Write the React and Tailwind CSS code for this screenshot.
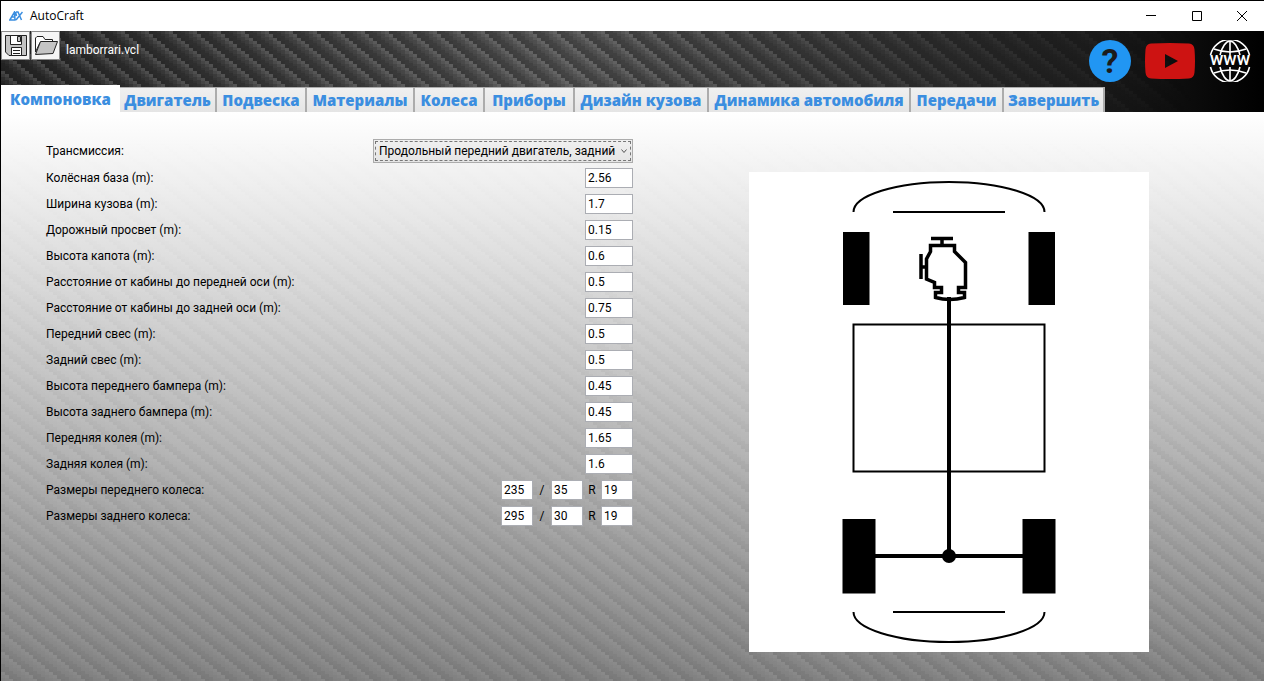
import React, { useState } from "react";

const tabs = [
  { name: "Компоновка", width: "w-[119px]" },
  { name: "Двигатель", width: "w-[97px]" },
  { name: "Подвеска", width: "w-[90px]" },
  { name: "Материалы", width: "w-[108px]" },
  { name: "Колеса", width: "w-[70px]" },
  { name: "Приборы", width: "w-[90px]" },
  { name: "Дизайн кузова", width: "w-[134px]" },
  { name: "Динамика автомобиля", width: "w-[202px]" },
  { name: "Передачи", width: "w-[93px]" },
  { name: "Завершить", width: "w-[101px]" },
];

const dimensions = [
  { id: "wheelbase", label: "Колёсная база (m):", value: "2.56" },
  { id: "bodyWidth", label: "Ширина кузова (m):", value: "1.7" },
  { id: "clearance", label: "Дорожный просвет (m):", value: "0.15" },
  { id: "hoodHeight", label: "Высота капота (m):", value: "0.6" },
  { id: "cabinFront", label: "Расстояние от кабины до передней оси (m):", value: "0.5" },
  { id: "cabinRear", label: "Расстояние от кабины до задней оси (m):", value: "0.75" },
  { id: "frontOverhang", label: "Передний свес (m):", value: "0.5" },
  { id: "rearOverhang", label: "Задний свес (m):", value: "0.5" },
  { id: "frontBumper", label: "Высота переднего бампера (m):", value: "0.45" },
  { id: "rearBumper", label: "Высота заднего бампера (m):", value: "0.45" },
  { id: "frontTrack", label: "Передняя колея (m):", value: "1.65" },
  { id: "rearTrack", label: "Задняя колея (m):", value: "1.6" },
];

const wheels = [
  { id: "frontWheel", label: "Размеры переднего колеса:", size: ["235", "35", "19"] },
  { id: "rearWheel", label: "Размеры заднего колеса:", size: ["295", "30", "19"] },
];

// top edge of every 4px wide strand, the weave repeats after 20px
const strands = [0, 3, 7, 10, 13, 17];

const Weave = ({ id, className }) => (
  <svg className={className} width="100%" height="100%" aria-hidden="true">
    <defs>
      <pattern id={id} width="24" height="20" patternUnits="userSpaceOnUse">
        {strands.map((y, i) =>
          [y, y - 20].map((top) => (
            <g key={top}>
              <rect x={i * 4} y={top} width="4" height="3" fill="#fff" opacity="0.28" />
              <rect x={i * 4} y={top + 3} width="4" height="3" fill="#fff" opacity="0.18" />
              <rect x={i * 4} y={top + 6} width="4" height="4" fill="#fff" opacity="0.06" />
              <rect x={i * 4} y={top + 12} width="4" height="5" fill="#000" opacity="0.2" />
              <rect x={i * 4} y={top + 17} width="4" height="3" fill="#000" opacity="0.3" />
            </g>
          ))
        )}
      </pattern>
    </defs>
    <rect width="100%" height="100%" fill={`url(#${id})`} />
  </svg>
);

const AppLogo = () => (
  <svg width="14" height="10" viewBox="0 0 14 10" fill="none" stroke="#3b8ee0" strokeWidth="1.5">
    <path d="M0.8 9 5.5 1 6 9zM3 6h3M7 1h2l3.500 8M13.500 1 7 9M6.500 1l1 4" />
  </svg>
);

const SaveIcon = () => (
  <svg width="24" height="24" viewBox="0 0 24 24" fill="none" stroke="#222" strokeWidth="1">
    <path fill="#c4c4c4" d="M1.500 1.500h21v20H5L1.500 18z" />
    <path fill="#fff" d="M6.500 1.500h11v9h-11z" />
    <path fill="#c4c4c4" d="M13.500 2.500h3v5h-3z" />
    <path fill="#fff" d="M7.500 13.500h10v8h-10z" />
    <path d="M9 16.500h7M9 19.500h7" />
  </svg>
);

const FolderIcon = () => (
  <svg width="24" height="24" viewBox="0 0 24 24" stroke="#222" strokeWidth="1" strokeLinejoin="round">
    <path fill="#fff" d="M1.500 18V4L3 2.500h6l2 3h7.500v3H6z" />
    <path fill="#c4c4c4" d="M1.500 20.500 6.500 7.500h17L19 19.500z" />
  </svg>
);

const HelpIcon = () => (
  <svg width="42" height="42" viewBox="0 0 42 42">
    <circle cx="21" cy="21" r="21" fill="#2196f3" />
    <text x="21" y="33" textAnchor="middle" fill="#1c1c1c" className="font-['Roboto',sans-serif] text-[34px] font-bold">?</text>
  </svg>
);

const VideoIcon = () => (
  <svg width="50" height="36" viewBox="0 0 50 36">
    <path
      fill="#cd1312"
      fillRule="evenodd"
      d="M6 .5Q25-.5 44 .5 49 1 49.500 6.500q1 11.500 0 23-.5 5.500-5.500 6-19 1-38 0-5-.5-5.500-6-1-11.500 0-23Q1 1 6 .5zM20 11v14l13-7z"
    />
  </svg>
);

const WebIcon = () => (
  <svg width="42" height="42" viewBox="0 0 42 42" fill="none" stroke="#fff" strokeWidth="1.600">
    <path d="M1.500 15a20 20 0 0 1 39 0M1.500 27a20 20 0 0 0 39 0M21 1v14M21 27v14" />
    <path d="M11 15C13 7 17 1 21 1s8 6 10 14M11 27c2 8 6 14 10 14s8-6 10-14" />
    <path d="M5 9q16 6 32 0M5 33q16-6 32 0" />
    <text x="21" y="25" textAnchor="middle" fill="#fff" stroke="none" className="font-['Roboto',sans-serif] text-[18px] font-medium">www</text>
  </svg>
);

const CarDiagram = () => (
  <svg className="block w-full" viewBox="0 0 400 480" role="img" aria-label="Схема автомобиля">
    <rect width="400" height="480" fill="#fff" />
    <g fill="none" stroke="#000" strokeWidth="2">
      <path d="M104.500 40A95.500 30 0 0 1 295.500 40M144 40h112" />
      <path d="M104.500 152.500h191v147h-191z" />
      <path d="M104.500 440A95.500 30 0 0 0 295.500 440M144 440h112" />
    </g>
    <path d="M94 60h26.500v73H94zM279.500 60H306v73h-26.500zM93.500 347h33v74.500h-33zM273.500 347h33v74.500h-33z" />
    <path d="M200 125v259M126 384h148" stroke="#000" strokeWidth="4" />
    <circle cx="200" cy="384" r="7" />
    <path
      d="M182 66.500h22M193 66.500v6M172 82v25M172 95h5M181.500 73.500h24v6l11 11v25h-7v5h6v5q-15 4-29 0v-5h6v-5h-7v-5l-8-3.500V87l4-7.500z"
      fill="none"
      stroke="#000"
      strokeWidth="3.500"
    />
  </svg>
);

const App = () => {
  const [activeTab, setActiveTab] = useState("Компоновка");

  return (
    <div className="flex min-h-screen flex-col border-l border-t border-black bg-white font-['Open_Sans','Noto_Sans',sans-serif] text-xs text-black">
      <header className="flex h-[30px] shrink-0 items-center justify-between pl-2">
        <div className="flex items-center gap-[7px]">
          <AppLogo />
          <h1>AutoCraft</h1>
        </div>
        <div className="flex h-full">
          <button className="flex w-[46px] items-center justify-center" aria-label="Свернуть">
            <svg width="10" height="10" stroke="#000"><path d="M0 4.500h10" /></svg>
          </button>
          <button className="flex w-[46px] items-center justify-center" aria-label="Развернуть">
            <svg width="10" height="10" stroke="#000" fill="none"><path d="M.5.5h9v9h-9z" /></svg>
          </button>
          <button className="flex w-11 items-center justify-center" aria-label="Закрыть">
            <svg width="10" height="10" stroke="#000"><path d="M0 0l10 10M10 0L0 10" /></svg>
          </button>
        </div>
      </header>

      <div className="grid h-[81px] shrink-0 bg-[linear-gradient(to_right,#262626,#4c4c4c_45%,#1c1c1c_86%,#000)]">
        <Weave id="toolbarWeave" className="col-start-1 row-start-1 h-[81px] mask-r-from-50% mask-r-to-95% opacity-50" />
        <div className="z-10 col-start-1 row-start-1 flex flex-col justify-between">
          <div className="flex items-start justify-between">
            <div className="flex items-center gap-px">
              <button className="flex size-[29px] items-center justify-center border border-[#8a8a8a] bg-[#f5f5f5]" aria-label="Сохранить">
                <SaveIcon />
              </button>
              <button className="flex size-[29px] items-center justify-center border border-[#8a8a8a] bg-[#f5f5f5]" aria-label="Открыть">
                <FolderIcon />
              </button>
              <span className="pl-[5px] pt-2 font-['Roboto',sans-serif] text-white">lamborrari.vcl</span>
            </div>
            <div className="flex h-[52px] items-center gap-[14px] pr-[13px] pt-2">
              <a href="#help" aria-label="Справка"><HelpIcon /></a>
              <a href="#video" aria-label="Видео"><VideoIcon /></a>
              <a href="#web" aria-label="Сайт"><WebIcon /></a>
            </div>
          </div>
          <nav className="flex items-end" role="tablist">
            {tabs.map((tab) => (
              <button
                key={tab.name}
                role="tab"
                aria-selected={activeTab === tab.name}
                onClick={() => setActiveTab(tab.name)}
                className={`${tab.width} shrink-0 whitespace-nowrap text-[15px] font-extrabold leading-6 text-[#3b8ee0] ${
                  activeTab === tab.name
                    ? "h-[27px] bg-white"
                    : "h-[25px] border-r-2 border-t border-[#acacac] bg-linear-to-b from-[#f0f0f0] to-[#e5e5e5]"
                }`}
              >
                {tab.name}
              </button>
            ))}
          </nav>
        </div>
      </div>

      <main className="grid grow bg-[linear-gradient(to_bottom,#fff,#808080)]">
        <Weave id="pageWeave" className="col-start-1 row-start-1 mask-t-from-0% mask-t-to-100% opacity-20" />
        <div className="z-10 col-start-1 row-start-1 flex items-start justify-between pl-[45px] pr-[115px]">
          <form className="flex w-[587px] flex-col pt-[25px] font-['Roboto','Noto_Sans',sans-serif]">
            <div className="flex h-7 items-center justify-between">
              <label htmlFor="transmission">Трансмиссия:</label>
              <div className="grid w-[260px] items-center">
                <select
                  id="transmission"
                  className="col-start-1 row-start-1 h-6 w-full appearance-none border border-[#acacac] bg-linear-to-b from-[#f0f0f0] to-[#e5e5e5] pl-[5px] outline-1 -outline-offset-3 outline-dashed outline-[#777]"
                >
                  <option>Продольный передний двигатель, задний</option>
                </select>
                <svg className="pointer-events-none col-start-1 row-start-1 mr-[6px] justify-self-end" width="6" height="5" fill="none" stroke="#555">
                  <path d="M.5.5 3 3.500 5.500.5" />
                </svg>
              </div>
            </div>
            {dimensions.map((item) => (
              <div key={item.id} className="flex h-[26px] items-center justify-between">
                <label htmlFor={item.id}>{item.label}</label>
                <input
                  id={item.id}
                  defaultValue={item.value}
                  className="h-5 w-12 border border-[#abadb3] bg-white px-[2px]"
                />
              </div>
            ))}
            {wheels.map((wheel) => (
              <div key={wheel.id} className="flex h-[26px] items-center justify-between">
                <label htmlFor={wheel.id}>{wheel.label}</label>
                <div className="flex items-center">
                  <input id={wheel.id} defaultValue={wheel.size[0]} className="h-5 w-8 border border-[#abadb3] bg-white px-[2px]" />
                  <span className="w-[18px] text-center">/</span>
                  <input aria-label="Профиль" defaultValue={wheel.size[1]} className="h-5 w-8 border border-[#abadb3] bg-white px-[2px]" />
                  <span className="w-[18px] text-center">R</span>
                  <input aria-label="Диаметр" defaultValue={wheel.size[2]} className="h-5 w-8 border border-[#abadb3] bg-white px-[2px]" />
                </div>
              </div>
            ))}
          </form>
          <div className="w-[400px] pb-7 pt-[60px]">
            <CarDiagram />
          </div>
        </div>
      </main>
    </div>
  );
};

export default App;
